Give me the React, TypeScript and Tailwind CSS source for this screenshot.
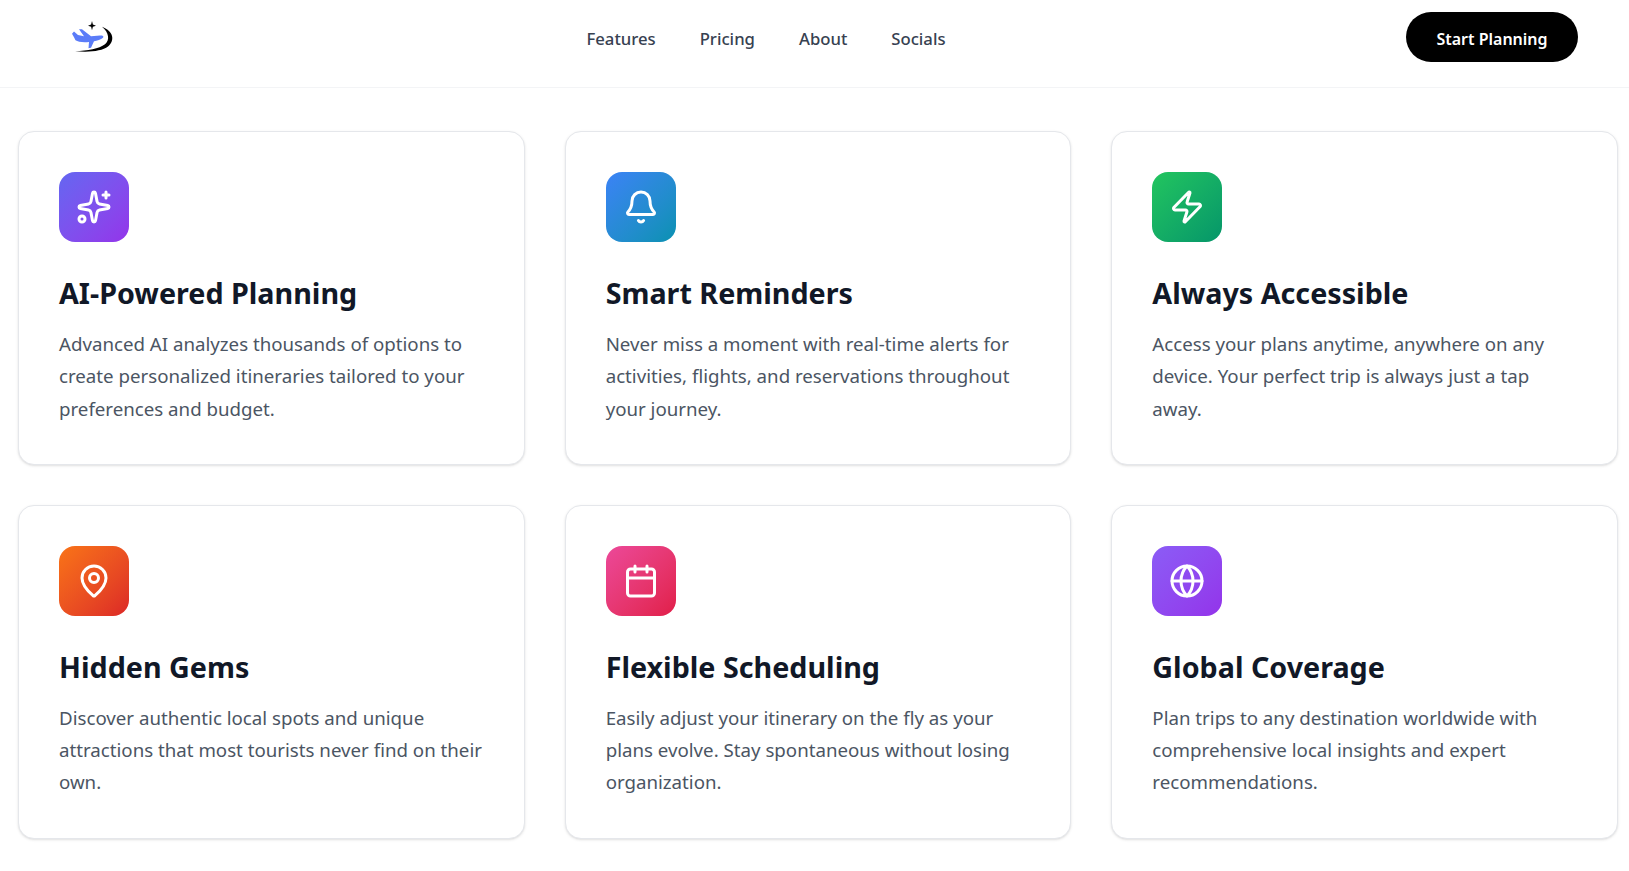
import { Bell, Calendar, Globe, MapPin, Sparkles, Zap } from "lucide-react";
import type { LucideIcon } from "lucide-react";

interface Feature {
  icon: LucideIcon;
  title: string;
  text: string;
  gradient: string;
}

const features: Feature[] = [
  {
    icon: Sparkles,
    title: "AI-Powered Planning",
    text: "Advanced AI analyzes thousands of options to create personalized itineraries tailored to your preferences and budget.",
    gradient: "from-[#6366f1] to-[#9333ea]",
  },
  {
    icon: Bell,
    title: "Smart Reminders",
    text: "Never miss a moment with real-time alerts for activities, flights, and reservations throughout your journey.",
    gradient: "from-[#3b82f6] to-[#0891b2]",
  },
  {
    icon: Zap,
    title: "Always Accessible",
    text: "Access your plans anytime, anywhere on any device. Your perfect trip is always just a tap away.",
    gradient: "from-[#22c55e] to-[#059669]",
  },
  {
    icon: MapPin,
    title: "Hidden Gems",
    text: "Discover authentic local spots and unique attractions that most tourists never find on their own.",
    gradient: "from-[#f97316] to-[#dc2626]",
  },
  {
    icon: Calendar,
    title: "Flexible Scheduling",
    text: "Easily adjust your itinerary on the fly as your plans evolve. Stay spontaneous without losing organization.",
    gradient: "from-[#ec4899] to-[#e11d48]",
  },
  {
    icon: Globe,
    title: "Global Coverage",
    text: "Plan trips to any destination worldwide with comprehensive local insights and expert recommendations.",
    gradient: "from-[#8b5cf6] to-[#9333ea]",
  },
];

const Logo = () => (
  <svg width="44" height="32" viewBox="0 0 44 27.5" preserveAspectRatio="none" aria-label="logo">
    <path d="M30 5 C42 9 43 17 36 22 C30 26 18 27 3 26 C16 25.5 27 24 33 20 C38 16.5 37 10 30 5 Z" fill="#000" />
    <path d="M20 0 L20.9 3.1 L24 4 L20.9 4.9 L20 8 L19.1 4.9 L16 4 L19.1 3.1 Z" fill="#000" />
    <path
      d="M0 11 L2 9 L6 12 L12 13 L7 7 L10 7 L19 13 L28 12.5 C31 12.5 32 13 31 14.5 C29 16 25 17 22 17.5 L19 23 L16.5 23.5 L17 18 C11 18.5 6 18 3.5 16.5 L2 14 Z"
      fill="#5b7cf8"
    />
  </svg>
);

const FeatureCard = ({ icon: Icon, title, text, gradient }: Feature) => (
  <div className="rounded-2xl border border-[#e5e7eb] bg-white px-10 pt-10 pb-[39px] shadow-sm">
    <div className={`mb-7 flex h-[70px] w-[70px] items-center justify-center rounded-2xl bg-gradient-to-br ${gradient}`}>
      <Icon size={36} strokeWidth={2} className="text-white" />
    </div>
    <h3 className="mb-[13px] text-[28.7px] leading-[45px] font-bold text-[#111827]">{title}</h3>
    <p className="text-[18.7px] leading-[32.3px] text-[#4b5563]">{text}</p>
  </div>
);

export default function App() {
  return (
    <div className="min-h-screen bg-white font-['Noto_Sans','Open_Sans',sans-serif]">
      <header className="flex h-[88px] items-center justify-between border-b border-[#f3f4f6] pr-[51px] pb-[13px] pl-[72px]">
        <Logo />
        <nav className="mt-[4px] ml-[10px] flex items-center gap-[44px] text-[16.7px] font-medium text-[#374151]">
          <a>Features</a>
          <a>Pricing</a>
          <a>About</a>
          <a>Socials</a>
        </nav>
        <button className="h-[50px] w-[172px] rounded-full bg-black pt-[3px] text-[16px] font-semibold text-white">
          Start Planning
        </button>
      </header>
      <main className="grid grid-cols-3 gap-10 pt-[43px] pr-[11px] pl-[18px]">
        {features.map((f) => (
          <FeatureCard key={f.title} {...f} />
        ))}
      </main>
    </div>
  );
}
